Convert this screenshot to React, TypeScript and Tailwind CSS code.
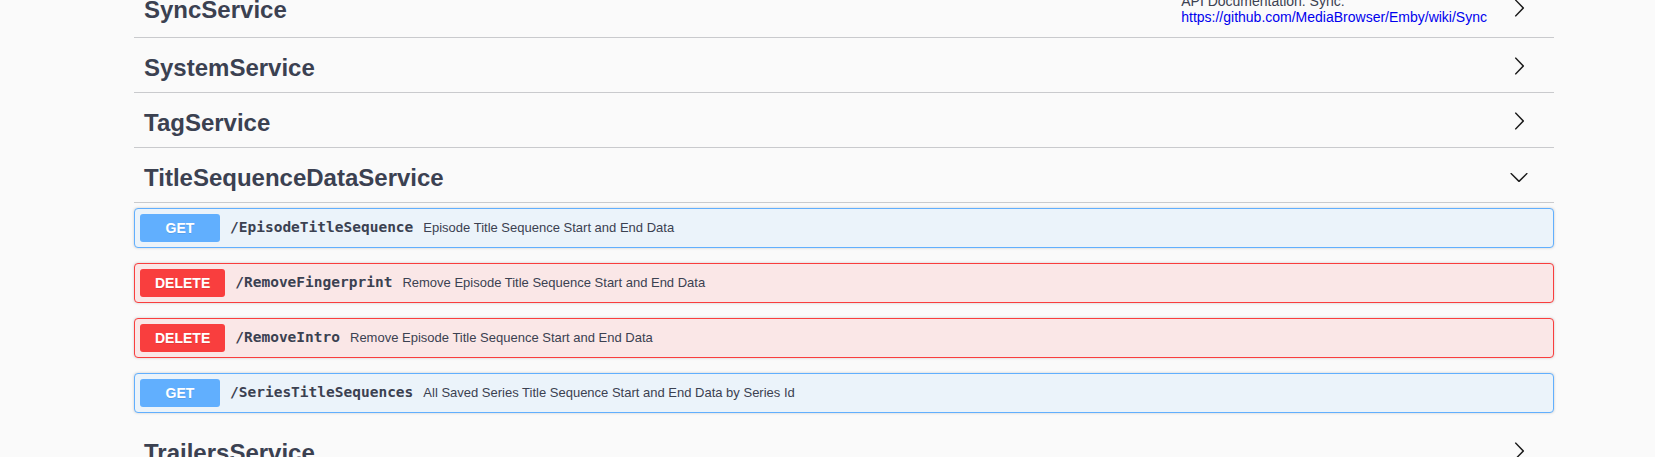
import React from "react";

const SANS = { fontFamily: '"Liberation Sans", Arial, sans-serif' };
const MONO = { fontFamily: '"DejaVu Sans Mono", "Liberation Mono", monospace' };

function ArrowRight() {
  return (
    <svg width="20" height="20" viewBox="0 0 20 20" className="shrink-0 mr-[25px] mb-[4px]" fill="#1b1b1b">
      <path d="M13.25 10L6.109 2.58c-.268-.27-.268-.707 0-.979.268-.27.701-.27.969 0l7.83 7.908c.268.271.268.709 0 .979l-7.83 7.908c-.268.271-.701.27-.969 0-.268-.269-.268-.707 0-.979L13.25 10z" />
    </svg>
  );
}

function ArrowDown() {
  return (
    <svg width="20" height="20" viewBox="0 0 20 20" className="shrink-0 mr-[25px] mb-[2px]" fill="#1b1b1b">
      <path d="M17.418 6.109c.272-.268.709-.268.979 0s.271.701 0 .969l-7.908 7.83c-.27.268-.707.268-.979 0l-7.908-7.83c-.27-.268-.27-.701 0-.969.271-.268.709-.268.979 0L10 13.25l7.418-7.141z" />
    </svg>
  );
}

function TagRow({ name, open, children }: { name: string; open?: boolean; children?: React.ReactNode }) {
  return (
    <div className="flex items-center min-h-[50px] py-[10px] pl-[10px] border-b border-[#c9cacd] mb-[5px]">
      <span className="text-[24px] leading-[28px] font-bold text-[#3b4151]">{name}</span>
      <div className="flex-1" />
      {children}
      {open ? <ArrowDown /> : <ArrowRight />}
    </div>
  );
}

type Method = "GET" | "DELETE";

function Op({ method, path, summary }: { method: Method; path: string; summary: string }) {
  const isGet = method === "GET";
  return (
    <div
      className={
        isGet
          ? "mb-[15px] rounded-[4px] border border-[#61affe] bg-[#ebf3fa] shadow-[0_0_3px_rgba(0,0,0,0.19)]"
          : "mb-[15px] rounded-[4px] border border-[#f93e3e] bg-[#fae7e7] shadow-[0_0_3px_rgba(0,0,0,0.19)]"
      }
    >
      <div className="flex items-center p-[5px]">
        <span
          className={
            isGet
              ? "min-w-[80px] px-[15px] py-[6px] rounded-[3px] bg-[#61affe] text-white text-[14px] leading-[16px] font-bold text-center [text-shadow:0_1px_0_rgba(0,0,0,0.1)]"
              : "min-w-[80px] px-[15px] py-[6px] rounded-[3px] bg-[#f93e3e] text-white text-[14px] leading-[16px] font-bold text-center [text-shadow:0_1px_0_rgba(0,0,0,0.1)]"
          }
          style={SANS}
        >
          {method}
        </span>
        <span className="px-[10px] text-[14.5px] font-bold text-[#3b4151]" style={MONO}>
          {path}
        </span>
        <span className="text-[13px] text-[#3b4151]" style={SANS}>
          {summary}
        </span>
      </div>
    </div>
  );
}

export default function App() {
  return (
    <div className="h-[457px] overflow-hidden bg-[#fafafa]" style={SANS}>
      <div className="pl-[134px] pr-[101px] mt-[-17px]">
        <TagRow name="SyncService">
          <div className="mr-[22px] mb-[2px] text-[14px] leading-[16px] text-[#3b4151]">
            <div>API Documentation: Sync:</div>
            <div className="text-[#0000ee]">https://github.com/MediaBrowser/Emby/wiki/Sync</div>
          </div>
        </TagRow>
        <TagRow name="SystemService" />
        <TagRow name="TagService" />
        <TagRow name="TitleSequenceDataService" open />
        <div>
          <Op method="GET" path="/EpisodeTitleSequence" summary="Episode Title Sequence Start and End Data" />
          <Op method="DELETE" path="/RemoveFingerprint" summary="Remove Episode Title Sequence Start and End Data" />
          <Op method="DELETE" path="/RemoveIntro" summary="Remove Episode Title Sequence Start and End Data" />
          <Op method="GET" path="/SeriesTitleSequences" summary="All Saved Series Title Sequence Start and End Data by Series Id" />
        </div>
        <TagRow name="TrailersService" />
        <TagRow name="TvShowsService" />
      </div>
    </div>
  );
}
